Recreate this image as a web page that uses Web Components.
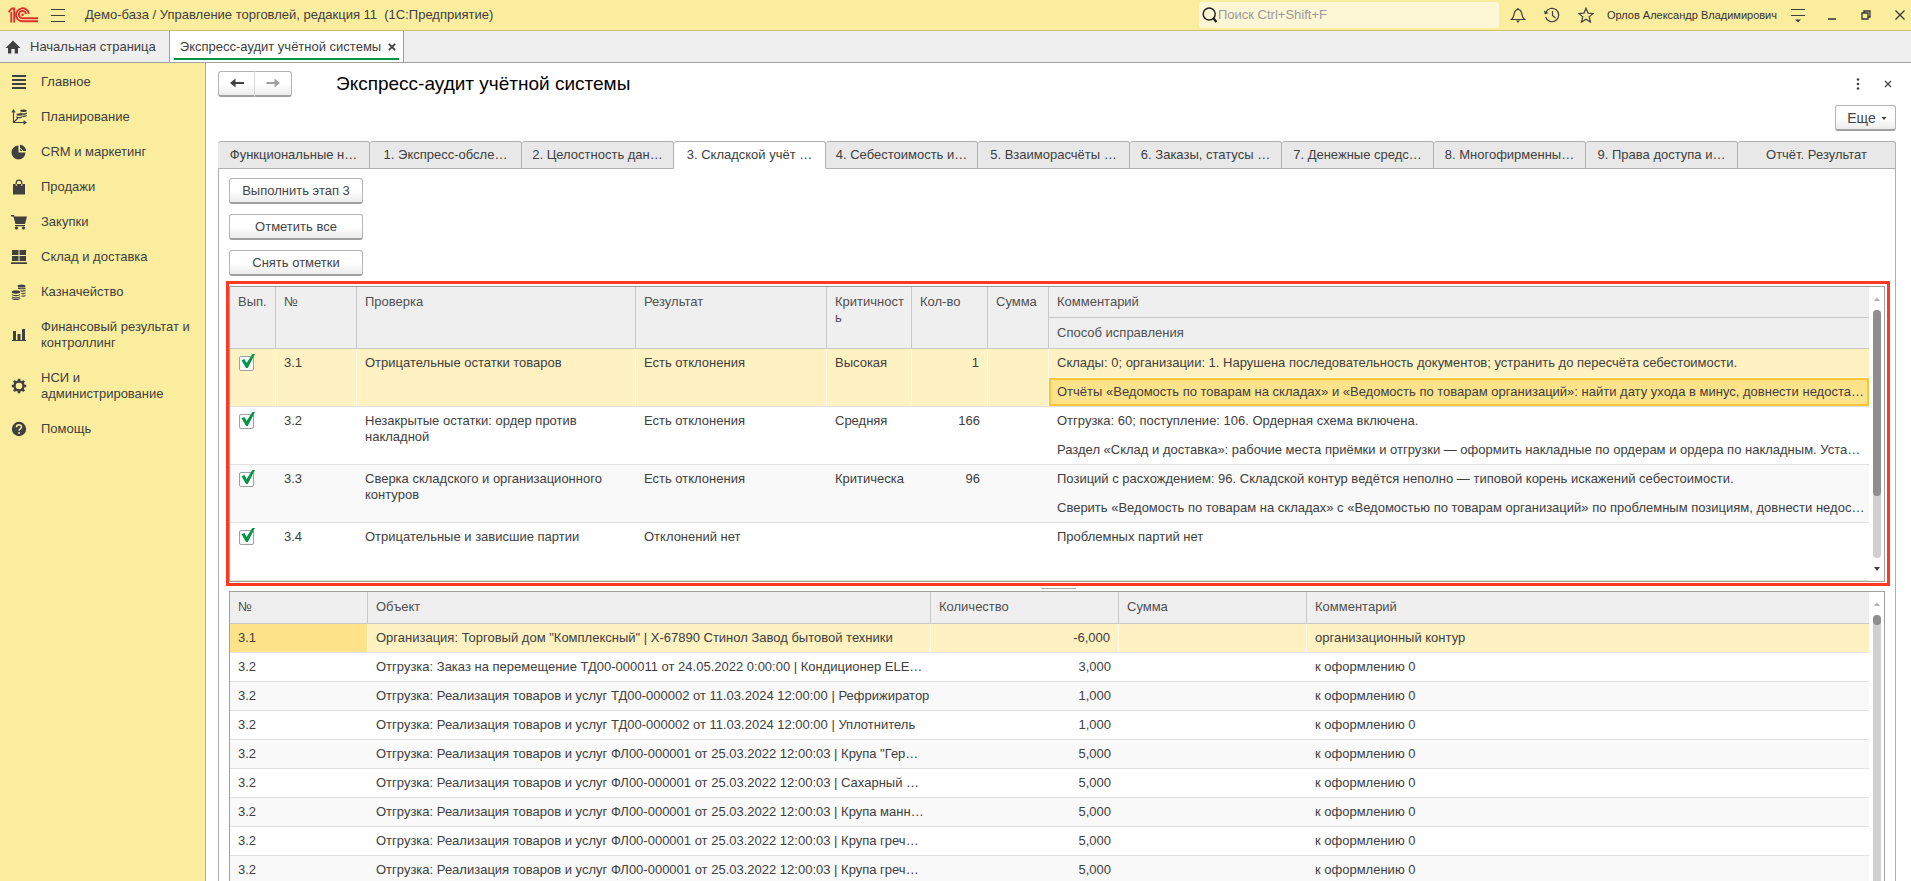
<!DOCTYPE html>
<html lang="ru">
<head>
<meta charset="utf-8">
<title>Экспресс-аудит учётной системы</title>
<style>
    html, body {
        margin: 0;
        height: 100%;
        overflow: hidden;
    }
    body {
        font-family: "Liberation Sans", Arial, sans-serif;
        font-size: 13px;
        line-height: 16px;
        color: #404040;
        background: #fff;
    }
</style>
</head>
<body>
<audit-app></audit-app>

<script>
const ICONS = {
    logo: ['0 0 30 16', '<g fill="none" stroke="#e0302c" stroke-width="1.9"><path d="M0.500 5 4 1.500H6.200V15.500M3.300 5V15.500"/><path d="M20.900 6.600A6.500 6.500 0 1 0 14.700 14.300H30"/><path d="M18 7.200A3.600 3.600 0 1 0 14.700 11.200H30"/></g><circle cx="14.600" cy="7.800" r="1.300" fill="#e0302c"/>'],
    burger: ['0 0 16 16', '<path d="M1 2.5h14M1 8.5h14M1 14.5h14" stroke="#404040" stroke-width="1.2"/>'],
    home: ['0 0 16 16', '<path d="M8 1.5 15.5 9H13v5.5H9.7V10H6.3v4.5H3V9H.5Z"/>'],
    lines: ['0 0 16 16', '<path d="M1 1h14v2H1zM1 5h14v2H1zM1 9h14v2H1zM1 13h14v2H1z"/>'],
    plan: ['0 0 16 16', '<path d="M2.500 2v11.500H14M.8 3.500l1.700-2.500 1.700 2.500M12.500 11.800l2.500 1.700-2.500 1.700M2.500 13.500 7 9" fill="none" stroke="#404040" stroke-width="1.1"/><ellipse cx="12.500" cy="1.800" rx="3.300" ry="1.300"/><path d="M9.200 3.300c1 1.500 5.600 1.500 6.600 0v1.400c-1 1.500-5.600 1.500-6.600 0zM11.500 6.600c1.500.3 3.300 0 4.200-.8v1.200c-.9.900-2.500 1.200-4.200.9z"/><ellipse cx="8.300" cy="5.600" rx="3" ry="1.200"/><path d="M5.300 7c1 1.300 5 1.300 6 0v1.300c-1 1.300-5 1.300-6 0z"/>'],
    pie: ['0 0 16 16', '<path d="M7.500 1.500V8.500H14.500A7 7 0 1 1 7.500 1.500Z"/><path d="M9 .8A6.500 6.500 0 0 1 15.200 7H12.500L9 7Z"/><path d="M9 4.200 12 7" stroke="#fbed9e" stroke-width="1"/>'],
    bag: ['0 0 16 16', '<path d="M2 5h12v10.500H2z"/><path d="M5.200 7V4a2.800 2.800 0 0 1 5.600 0v3" fill="none" stroke="#404040" stroke-width="1.300"/><path d="M5.200 5v2M10.800 5v2" stroke="#fbed9e"/>'],
    cart: ['0 0 16 16', '<path d="M0 1h3l.6 1.500H16L14 10H4.500L2.400 2.500H0zM4 11h10v1.300H4z"/><circle cx="5.500" cy="14" r="1.600"/><circle cx="12.500" cy="14" r="1.600"/>'],
    boxes: ['0 0 16 16', '<path d="M1 1h6.500v5H1zM8.500 1H15v5H8.500zM1 7h6.500v5H1zM8.500 7H15v5H8.500zM0 13.300h16V15H0z"/>'],
    coins: ['0 0 16 16', '<ellipse cx="10.500" cy="2" rx="4" ry="1.600"/><ellipse cx="5" cy="8" rx="4.300" ry="1.700"/><path d="M7 4c1.500 1 6 1 7.500 0M9.500 6.800c2 .4 4 .2 5-.5M10.500 9.500c1.500.2 3 0 4-.5M10.500 12c1.500.2 3 0 4-.5M1 10.500c1 1.600 7 1.600 8 0M1 12.700c1 1.600 7 1.600 8 0M1 14.500c1 1.300 7 1.300 8 0" fill="none" stroke="#404040" stroke-width="1.200"/>'],
    bars: ['0 0 16 16', '<path d="M2 4h3v9H2zM6.500 7h3v6h-3zM11 2h3v11h-3zM1 13h14v1H1z"/>'],
    gear: ['0 0 16 16', '<circle cx="8" cy="8" r="4.500" fill="none" stroke="#404040" stroke-width="2.400"/><path d="M8 .8v2.500M8 12.700v2.500M.8 8h2.500M12.700 8h2.500M2.900 2.900l1.800 1.800M11.300 11.300l1.800 1.800M2.900 13.100l1.800-1.800M11.300 4.700l1.800-1.800" stroke="#404040" stroke-width="2.600"/>'],
    help: ['0 0 16 16', '<circle cx="8" cy="8" r="7.200"/><path d="M5.500 6.300c0-3.300 5-3.200 5-.3 0 1.900-2.400 1.900-2.400 3.700" fill="none" stroke="#fbed9e" stroke-width="1.600"/><circle cx="8.100" cy="12" r="1" fill="#fbed9e"/>'],
    search: ['0 0 16 16', '<circle cx="7.200" cy="7" r="6" fill="none" stroke="#222" stroke-width="1.500"/><path d="m11.300 11.300 3.200 3.700" stroke="#222" stroke-width="2.400"/>'],
    bell: ['0 0 16 16', '<path d="M1.500 12.500c2.800-2 2-4.500 3-7C5 3.500 6 2.500 8 2.500s3 1 3.500 3c1 2.500.2 5 3 7Z" fill="none" stroke="#404040" stroke-width="1.200"/><path d="M6 13.500h4L8 16ZM7.300 1h1.400v1.500H7.300z"/>'],
    history: ['0 0 16 16', '<path d="M1.800 5.500A6.700 6.700 0 1 1 1.600 10M8.500 4v4.500l3 2.500" fill="none" stroke="#404040" stroke-width="1.200"/><path d="M0 3.500 4.500 6 .8 7.500Z"/>'],
    star: ['0 0 16 16', '<path d="m8 1.200 2 4.900 5.200.4-4 3.400 1.300 5.200L8 12.300l-4.500 2.800 1.300-5.200-4-3.400L6 6.100Z" fill="none" stroke="#404040" stroke-width="1.200"/>'],
    menu: ['0 0 16 16', '<path d="M1 2.500h14M1 8.500h14" stroke="#404040" stroke-width="1.200"/><path d="M5 12.500h6L8 15.500Z"/>'],
    min: ['0 0 16 16', '<path d="M4 12h8" stroke="#333" stroke-width="1.500"/>'],
    restore: ['0 0 16 16', '<path d="M4 6h6v6H4zM6 6V4h6v6h-2" fill="none" stroke="#333" stroke-width="1.300"/>'],
    close: ['0 0 16 16', '<path d="m3.500 3.500 9 9m0-9-9 9" stroke="#333" stroke-width="1.200"/>'],
    cross: ['0 0 16 16', '<path d="m4.800 4.800 6.400 6.400m0-6.400-6.400 6.400" stroke="#404040" stroke-width="1.800"/>'],
    thin: ['0 0 16 16', '<path d="m5 5 6 6m0-6-6 6" stroke="#404040" stroke-width="1.200"/>'],
    dots: ['0 0 16 16', '<circle cx="8" cy="3.500" r="1.300"/><circle cx="8" cy="8" r="1.300"/><circle cx="8" cy="12.500" r="1.300"/>'],
    left: ['0 0 16 16', '<path d="M1 8l5.500-4.500V7H15v2H6.500v3.500Z"/>'],
    right: ['0 0 16 16', '<path d="M15 8 9.500 3.500V7H1.500v2h8v3.500Z" fill="#a0a0a0"/>'],
    caret: ['0 0 16 16', '<path d="M5.500 7h5L8 10Z"/>'],
    up: ['0 0 16 16', '<path d="M5 10h6L8 6.500Z" fill="#b0b0b0"/>'],
    down: ['0 0 16 16', '<path d="M5 6h6L8 10Z"/>']
};

// small helper: open shadow root filled from a template
function render(host, html) {
    const template = document.createElement('template');
    template.innerHTML = html;
    host.attachShadow({ mode: 'open' }).appendChild(template.content.cloneNode(true));
}

class UiIcon extends HTMLElement {
    connectedCallback() {
        const [box, shape] = ICONS[this.getAttribute('name')];
        render(this, /*html*/`
            <style>
                :host { display: block; flex: none; width: 16px; height: 16px; }
                svg { display: block; width: 100%; height: 100%; fill: #404040; }
            </style>
            <svg viewBox="${box}" aria-hidden="true">${shape}</svg>
        `);
    }
}
customElements.define('ui-icon', UiIcon);

class TitleBar extends HTMLElement {
    connectedCallback() {
        render(this, /*html*/`
            <style>
                :host {
                    display: flex;
                    align-items: center;
                    height: 30px;
                    padding: 0 3px 0 8px;
                    background: #fbed9e;
                    border-bottom: 1px solid #cdbf6c;
                }
                button { padding: 0; border: 0; background: none; }
                .logo { width: 30px; height: 16px; }
                .menu { margin: 0 19px 0 12px; }
                h1 { flex: 1; margin: 0; font-size: 13px; font-weight: normal; white-space: pre; }
                label {
                    display: flex;
                    align-items: center;
                    box-sizing: border-box;
                    width: 300px;
                    height: 26px;
                    padding-left: 3px;
                    border-radius: 3px;
                    background: #fef7d5;
                }
                input {
                    flex: 1;
                    border: 0;
                    padding: 0;
                    outline: 0;
                    background: none;
                    font: inherit;
                }
                input::placeholder { color: #999; opacity: 1; }
                nav { display: flex; align-items: center; gap: 18px; }
                .tools { margin: 0 13px 0 11px; }
                .user { margin-right: 13px; font-size: 11px; color: #333; text-decoration: none; }
            </style>
            <ui-icon class="logo" name="logo"></ui-icon>
            <button class="menu" aria-label="Меню"><ui-icon name="burger"></ui-icon></button>
            <h1>Демо-база / Управление торговлей, редакция 11  (1С:Предприятие)</h1>
            <label><ui-icon name="search"></ui-icon><input type="text" placeholder="Поиск Ctrl+Shift+F" aria-label="Поиск"></label>
            <nav class="tools">
                <button aria-label="Уведомления"><ui-icon name="bell"></ui-icon></button>
                <button aria-label="История"><ui-icon name="history"></ui-icon></button>
                <button aria-label="Избранное"><ui-icon name="star"></ui-icon></button>
            </nav>
            <a class="user" href="#user">Орлов Александр Владимирович</a>
            <nav>
                <button aria-label="Настройки"><ui-icon name="menu"></ui-icon></button>
                <button aria-label="Свернуть"><ui-icon name="min"></ui-icon></button>
                <button aria-label="Развернуть"><ui-icon name="restore"></ui-icon></button>
                <button aria-label="Закрыть"><ui-icon name="close"></ui-icon></button>
            </nav>
        `);
    }
}
customElements.define('title-bar', TitleBar);

class WindowTabs extends HTMLElement {
    connectedCallback() {
        render(this, /*html*/`
            <style>
                :host {
                    display: flex;
                    height: 31px;
                    background: #efefef;
                    border-bottom: 1px solid #a0a0a0;
                }
                a, .active { display: flex; align-items: center; color: inherit; text-decoration: none; }
                a { padding: 0 13px 0 5px; gap: 9px; border-right: 1px solid #a0a0a0; }
                .active {
                    position: relative;
                    padding: 0 3px 0 10px;
                    gap: 3px;
                    background: #fff;
                    border-right: 1px solid #a0a0a0;
                }
                .active::after {
                    content: "";
                    position: absolute;
                    left: 4px;
                    right: 4px;
                    bottom: 2px;
                    height: 2px;
                    background: #009646;
                }
                button { padding: 0; border: 0; background: none; }
            </style>
            <a href="#home"><ui-icon name="home"></ui-icon>Начальная страница</a>
            <div class="active">Экспресс-аудит учётной системы<button aria-label="Закрыть вкладку"><ui-icon name="cross"></ui-icon></button></div>
        `);
    }
}
customElements.define('window-tabs', WindowTabs);

const SECTIONS = [
    ['lines', 'Главное'],
    ['plan', 'Планирование'],
    ['pie', 'CRM и маркетинг'],
    ['bag', 'Продажи'],
    ['cart', 'Закупки'],
    ['boxes', 'Склад и доставка'],
    ['coins', 'Казначейство'],
    ['bars', 'Финансовый результат и контроллинг'],
    ['gear', 'НСИ и администрирование'],
    ['help', 'Помощь']
];

class SideMenu extends HTMLElement {
    connectedCallback() {
        render(this, /*html*/`
            <style>
                :host {
                    display: block;
                    flex: none;
                    box-sizing: border-box;
                    width: 206px;
                    padding-top: 2px;
                    background: #fbed9e;
                    border-right: 1px solid #b9ae70;
                }
                a {
                    display: flex;
                    align-items: center;
                    gap: 14px;
                    padding: 9px 10px 10px 11px;
                    color: inherit;
                    text-decoration: none;
                }
            </style>
            ${SECTIONS.map(([icon, text]) => `<a href="#${icon}"><ui-icon name="${icon}"></ui-icon><span>${text}</span></a>`).join('')}
        `);
    }
}
customElements.define('side-menu', SideMenu);

class FormButton extends HTMLElement {
    connectedCallback() {
        render(this, /*html*/`
            <style>
                :host { display: block; }
                button {
                    display: flex;
                    align-items: center;
                    justify-content: center;
                    box-sizing: border-box;
                    width: 100%;
                    height: 26px;
                    padding: 0 4px;
                    border: 1px solid #b4b4b4;
                    border-bottom: 2px solid #a0a0a0;
                    border-radius: var(--radius, 3px);
                    background: linear-gradient(#fff 50%, #ececec);
                    font: inherit;
                    color: #444;
                }
                :host(.first) button { border-right: 1px solid #d8d8d8; }
                :host(.last) button { border-left: 0; }
            </style>
            <button><slot></slot></button>
        `);
    }
}
customElements.define('form-button', FormButton);

class ScrollRail extends HTMLElement {
    connectedCallback() {
        render(this, /*html*/`
            <style>
                :host {
                    display: flex;
                    flex-direction: column;
                    align-items: center;
                    flex: none;
                    width: 15px;
                    padding: 4px 0;
                    background: #fff;
                }
                .track { flex: 1; width: 8px; margin: 3px 0; border-radius: 4px; background: #cfcfcf; }
                .thumb { height: var(--thumb, 20%); border-radius: 4px; background: #8e8e8e; }
            </style>
            <ui-icon name="up"></ui-icon>
            <div class="track"><div class="thumb"></div></div>
            <ui-icon name="down"></ui-icon>
        `);
    }
}
customElements.define('scroll-rail', ScrollRail);

// rules shared by both grids
const GRID_STYLE = /*css*/`
    :host {
        display: flex;
        box-sizing: border-box;
        background: #fff;
        border: 1px solid #a0a0a0;
    }
    .body { flex: 1; min-width: 0; overflow: hidden; }
    table { width: 100%; table-layout: fixed; border-collapse: separate; border-spacing: 0; }
    th, td {
        box-sizing: border-box;
        height: 29px;
        padding: 6px 8px;
        overflow: hidden;
        vertical-align: top;
        text-align: left;
        font-weight: normal;
        white-space: nowrap;
        border-bottom: 1px solid #e2e2e2;
    }
    th {
        height: 31px;
        padding: 7px 4px 7px 8px;
        white-space: normal;
        word-break: break-all;
        background: #efefef;
        border-right: 1px solid #c8c8c8;
        border-bottom: 1px solid #c8c8c8;
        color: #505050;
    }
    th.last { border-right: 0; }
    .num { text-align: right; }
`;

const CHECKS = [
    ['3.1', 'Отрицательные остатки товаров', 'Есть отклонения', 'Высокая', '1',
        'Склады: 0; организации: 1. Нарушена последовательность документов; устранить до пересчёта себестоимости.',
        'Отчёты «Ведомость по товарам на складах» и «Ведомость по товарам организаций»: найти дату ухода в минус, довнести недоста…'],
    ['3.2', 'Незакрытые остатки: ордер против накладной', 'Есть отклонения', 'Средняя', '166',
        'Отгрузка: 60; поступление: 106. Ордерная схема включена.',
        'Раздел «Склад и доставка»: рабочие места приёмки и отгрузки — оформить накладные по ордерам и ордера по накладным. Уста…'],
    ['3.3', 'Сверка складского и организационного контуров', 'Есть отклонения', 'Критическа', '96',
        'Позиций с расхождением: 96. Складской контур ведётся неполно — типовой корень искажений себестоимости.',
        'Сверить «Ведомость по товарам на складах» с «Ведомостью по товарам организаций» по проблемным позициям, довнести недос…'],
    ['3.4', 'Отрицательные и зависшие партии', 'Отклонений нет', '', '', 'Проблемных партий нет', '']
];

class CheckGrid extends HTMLElement {
    connectedCallback() {
        const rows = CHECKS.map(([no, name, result, level, count, comment, fix]) => `
            <tbody>
                <tr>
                    <td rowspan="2"><input type="checkbox" aria-label="${name}" checked></td>
                    <td rowspan="2">${no}</td>
                    <td rowspan="2" class="wrap">${name}</td>
                    <td rowspan="2">${result}</td>
                    <td rowspan="2">${level}</td>
                    <td rowspan="2" class="num">${count}</td>
                    <td rowspan="2"></td>
                    <td class="comment">${comment}</td>
                </tr>
                <tr><td class="fix">${fix}</td></tr>
            </tbody>`).join('');

        render(this, /*html*/`
            <style>
                ${GRID_STYLE}
                .wrap { white-space: normal; }
                .comment { border-bottom-color: transparent; }
                tbody:nth-of-type(odd) td { background: #f9f9f9; }
                tbody:nth-of-type(even) td { background: #fff; }
                tbody:first-of-type td { background: #fef1c2; border-right: 1px solid #fffbea; }
                tbody:first-of-type td.comment { border-right: 0; border-bottom-color: #fffbea; }
                tbody:first-of-type td.fix {
                    border-right: 0;
                    background: #fee38b;
                    box-shadow: inset 0 0 0 2px #fbc53a;
                }
                td:first-child { overflow: visible; }
                td.fix { overflow: hidden; }
                input {
                    appearance: none;
                    display: block;
                    position: relative;
                    box-sizing: border-box;
                    width: 15px;
                    height: 15px;
                    margin: 1px;
                    border: 1px solid #a0a0a0;
                    border-radius: 2px;
                    background: #fff;
                }
                input:checked::after {
                    content: "";
                    position: absolute;
                    left: 1px;
                    top: -3px;
                    width: 14px;
                    height: 14px;
                    background: #009646;
                    clip-path: polygon(4% 45%, 24% 36%, 40% 64%, 82% 0, 100% 0, 48% 100%, 36% 100%);
                }
                scroll-rail { --thumb: 75%; }
            </style>
            <div class="body">
                <table>
                    <colgroup>
                        <col style="width: 46px"><col style="width: 81px"><col style="width: 279px"><col style="width: 191px">
                        <col style="width: 85px"><col style="width: 76px"><col style="width: 61px"><col>
                    </colgroup>
                    <thead>
                        <tr>
                            <th rowspan="2">Вып.</th><th rowspan="2">№</th><th rowspan="2">Проверка</th><th rowspan="2">Результат</th>
                            <th rowspan="2">Критичность</th><th rowspan="2">Кол-во</th><th rowspan="2">Сумма</th><th class="last">Комментарий</th>
                        </tr>
                        <tr><th class="last">Способ исправления</th></tr>
                    </thead>
                    ${rows}
                </table>
            </div>
            <scroll-rail></scroll-rail>
        `);
    }
}
customElements.define('check-grid', CheckGrid);

const SALE = 'Отгрузка: Реализация товаров и услуг ';
const DETAILS = [
    ['3.1', 'Организация: Торговый дом "Комплексный" | X-67890 Стинол Завод бытовой техники', '-6,000', 'организационный контур'],
    ['3.2', 'Отгрузка: Заказ на перемещение ТД00-000011 от 24.05.2022 0:00:00 | Кондиционер ELE…', '3,000', 'к оформлению 0'],
    ['3.2', SALE + 'ТД00-000002 от 11.03.2024 12:00:00 | Рефрижиратор', '1,000', 'к оформлению 0'],
    ['3.2', SALE + 'ТД00-000002 от 11.03.2024 12:00:00 | Уплотнитель', '1,000', 'к оформлению 0'],
    ['3.2', SALE + 'ФЛ00-000001 от 25.03.2022 12:00:03 | Крупа "Гер…', '5,000', 'к оформлению 0'],
    ['3.2', SALE + 'ФЛ00-000001 от 25.03.2022 12:00:03 | Сахарный …', '5,000', 'к оформлению 0'],
    ['3.2', SALE + 'ФЛ00-000001 от 25.03.2022 12:00:03 | Крупа манн…', '5,000', 'к оформлению 0'],
    ['3.2', SALE + 'ФЛ00-000001 от 25.03.2022 12:00:03 | Крупа греч…', '5,000', 'к оформлению 0'],
    ['3.2', SALE + 'ФЛ00-000001 от 25.03.2022 12:00:03 | Крупа греч…', '5,000', 'к оформлению 0']
];

class DetailGrid extends HTMLElement {
    connectedCallback() {
        const rows = DETAILS.map(([no, item, count, comment]) => `
            <tr><td>${no}</td><td class="item">${item}</td><td class="num">${count}</td><td></td><td>${comment}</td></tr>`).join('');

        render(this, /*html*/`
            <style>
                ${GRID_STYLE}
                th { height: 32px; }
                .item { padding-right: 0; }
                tbody tr:nth-child(odd) td { background: #f9f9f9; }
                tbody tr:first-child td { background: #fef1c2; border-right: 1px solid #fffbea; }
                tbody tr:first-child td:first-child { background: #fee38b; }
                tbody tr:first-child td:last-child { border-right: 0; }
                scroll-rail { --thumb: 10px; }
            </style>
            <div class="body">
                <table>
                    <colgroup>
                        <col style="width: 138px"><col style="width: 563px"><col style="width: 188px"><col style="width: 188px"><col>
                    </colgroup>
                    <thead><tr><th>№</th><th>Объект</th><th>Количество</th><th>Сумма</th><th class="last">Комментарий</th></tr></thead>
                    <tbody>${rows}</tbody>
                </table>
            </div>
            <scroll-rail></scroll-rail>
        `);
    }
}
customElements.define('detail-grid', DetailGrid);

const STAGES = [
    'Функциональные н…', '1. Экспресс-обсле…', '2. Целостность дан…', '3. Складской учёт …',
    '4. Себестоимость и…', '5. Взаиморасчёты …', '6. Заказы, статусы …', '7. Денежные средс…',
    '8. Многофирменны…', '9. Права доступа и…', 'Отчёт. Результат'
];

class StageTabs extends HTMLElement {
    connectedCallback() {
        render(this, /*html*/`
            <style>
                :host { display: flex; height: 28px; }
                button {
                    flex: 0 1 152px;
                    min-width: 0;
                    padding: 0 4px;
                    border: 1px solid #b0b0b0;
                    border-left-width: 0;
                    border-radius: 3px 3px 0 0;
                    background: #e8e8e8;
                    font: inherit;
                    color: inherit;
                    white-space: nowrap;
                }
                button:first-child { border-left-width: 1px; }
                button:last-child { flex-grow: 1; }
                button[aria-selected=true] { background: #fff; border-bottom-color: #fff; }
            </style>
            ${STAGES.map((text, i) => `<button role="tab" aria-selected="${i === 3}">${text}</button>`).join('')}
        `);
    }
}
customElements.define('stage-tabs', StageTabs);

class AuditForm extends HTMLElement {
    connectedCallback() {
        render(this, /*html*/`
            <style>
                :host {
                    display: flex;
                    flex-direction: column;
                    flex: 1;
                    min-width: 0;
                    padding: 8px 15px 0 12px;
                }
                header { display: flex; align-items: center; height: 25px; }
                .nav { display: flex; width: 74px; }
                .nav form-button { flex: 1; }
                .nav .first { --radius: 3px 0 0 3px; }
                .nav .last { --radius: 0 3px 3px 0; }
                h2 { flex: 1; margin: 0 0 0 44px; font-size: 19px; line-height: 22px; font-weight: normal; color: #000; }
                .plain { padding: 0; border: 0; background: none; }
                .tools { display: flex; gap: 14px; }
                .more { display: flex; justify-content: flex-end; margin: 9px 0 10px; font-size: 14px; }
                .more form-button { width: 61px; }
                .more ui-icon { margin-right: -8px; }
                .panel {
                    display: flex;
                    flex-direction: column;
                    flex: 1;
                    min-height: 0;
                    padding: 9px 5px 0 7px;
                    border: 1px solid #b0b0b0;
                    border-width: 0 1px;
                }
                .commands { display: flex; flex-direction: column; gap: 10px; width: 134px; margin: 0 0 5px 3px; }
                .marked { padding: 2px 2px 1px 0; border: 3px solid #fb3a26; }
                .splitter { height: 5px; display: flex; justify-content: center; align-items: center; }
                .splitter i { width: 35px; height: 1px; background: #b0b0b0; }
                .rest { display: flex; flex: 1; min-height: 0; overflow: hidden; padding: 0 5px 0 3px; }
                detail-grid { flex: 1; min-width: 0; height: 400px; }
            </style>
            <header>
                <div class="nav">
                    <form-button class="first"><ui-icon name="left"></ui-icon></form-button>
                    <form-button class="last"><ui-icon name="right"></ui-icon></form-button>
                </div>
                <h2>Экспресс-аудит учётной системы</h2>
                <div class="tools">
                    <button class="plain" aria-label="Действия"><ui-icon name="dots"></ui-icon></button>
                    <button class="plain" aria-label="Закрыть"><ui-icon name="thin"></ui-icon></button>
                </div>
            </header>
            <div class="more"><form-button>Еще<ui-icon name="caret"></ui-icon></form-button></div>
            <stage-tabs role="tablist"></stage-tabs>
            <div class="panel">
                <div class="commands">
                    <form-button>Выполнить этап 3</form-button>
                    <form-button>Отметить все</form-button>
                    <form-button>Снять отметки</form-button>
                </div>
                <div class="marked"><check-grid></check-grid></div>
                <div class="splitter"><i></i></div>
                <div class="rest"><detail-grid></detail-grid></div>
            </div>
        `);
    }
}
customElements.define('audit-form', AuditForm);

class AuditApp extends HTMLElement {
    connectedCallback() {
        render(this, /*html*/`
            <style>
                :host { display: flex; flex-direction: column; height: 100vh; overflow: hidden; }
                main { display: flex; flex: 1; min-height: 0; }
            </style>
            <title-bar></title-bar>
            <window-tabs></window-tabs>
            <main>
                <side-menu></side-menu>
                <audit-form></audit-form>
            </main>
        `);
    }
}
customElements.define('audit-app', AuditApp);
</script>
</body>
</html>
